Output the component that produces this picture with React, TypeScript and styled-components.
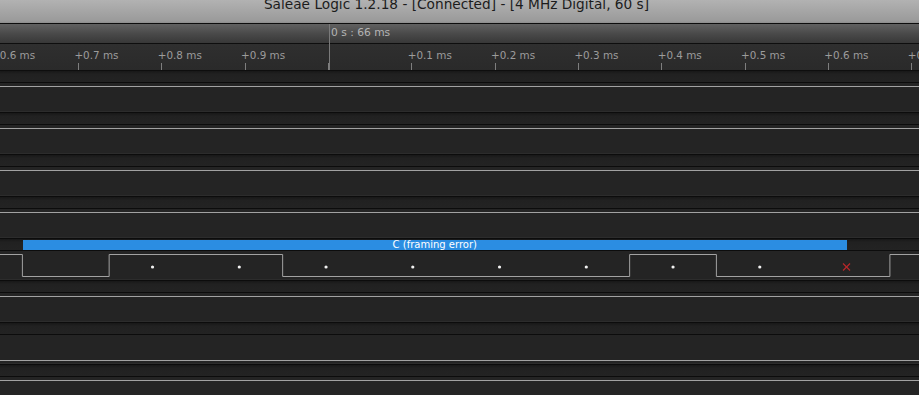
import React from 'react';
import styled, { createGlobalStyle } from 'styled-components';

const GlobalStyle = createGlobalStyle`
	html, body {
		margin: 0;
		padding: 0;
		background: #222;
		overflow: hidden;
	}
	* {
		box-sizing: border-box;
	}
`;

const FONT = `'DejaVu Sans', Verdana, sans-serif`;

const TICK_START = -5.33;
const TICK_STEP = 83.33;
const CURSOR_X = 329;

// serial frame timing (px)
const T0 = 22.4;
const BIT = 86.75;
const HIGH_Y = 3.5;
const LOW_Y = 25.5;

const tickLabels = ['+0.6', '+0.7', '+0.8', '+0.9', '', '+0.1', '+0.2', '+0.3', '+0.4', '+0.5', '+0.6', '+0.7'];

type Level = 'high' | 'low';

const channels: { level?: Level; serial?: boolean }[] = [
	{ level: 'high' },
	{ level: 'high' },
	{ level: 'high' },
	{ level: 'high' },
	{ serial: true },
	{ level: 'high' },
	{ level: 'low' },
	{ level: 'high' },
];

// start bit, data bits LSB first ('C' = 0x43), broken stop bit
const frameBits = [0, 1, 1, 0, 0, 0, 0, 1, 0, 0];

const serialPoints = () => {
	const pts: string[] = [`0,${HIGH_Y}`];
	let prev = 1;
	frameBits.forEach((b, i) => {
		if (b !== prev) {
			const x = T0 + i * BIT;
			pts.push(`${x},${prev ? HIGH_Y : LOW_Y}`, `${x},${b ? HIGH_Y : LOW_Y}`);
			prev = b;
		}
	});
	const end = T0 + frameBits.length * BIT;
	pts.push(`${end},${LOW_Y}`, `${end},${HIGH_Y}`, `919,${HIGH_Y}`);
	return pts.join(' ');
};

const App = () => {
	return (
		<Window>
			<GlobalStyle />
			<TitleBar>
				<TitleText>Saleae Logic 1.2.18 - [Connected] - [4 MHz Digital, 60 s]</TitleText>
			</TitleBar>
			<TimeBar>
				<TimeHeader />
				<Ruler>
					<TickStrip>
						{tickLabels.map((label, i) => (
							<TickCell key={i}>{label && <TickLabel>{label} ms</TickLabel>}</TickCell>
						))}
					</TickStrip>
				</Ruler>
				<Cursor style={{ left: CURSOR_X }}>
					<CursorLabel>0 s : 66 ms</CursorLabel>
				</Cursor>
			</TimeBar>
			<ChannelList>
				{channels.map((ch, i) => (
					<ChannelRow key={i}>
						<Band>
							{ch.serial && (
								<AnalyzerBar style={{ left: T0 + 0.6, width: BIT * 9.5 - 0.6 }}>C (framing error)</AnalyzerBar>
							)}
						</Band>
						<Rule />
						<Signal>
							<svg width="919" height="28" viewBox="0 0 919 28">
								{ch.serial ? (
									<>
										<polyline points={serialPoints()} fill="none" stroke="#a2a2a2" strokeWidth="1" />
										{Array.from({ length: 8 }, (_, k) => (
											<circle key={k} cx={T0 + BIT * (k + 1.5)} cy={16} r={1.6} fill="#f2f2f2" />
										))}
										<g stroke="#b8282a" strokeWidth="1.2">
											<line x1={T0 + BIT * 9.5 - 3.5} y1={12.5} x2={T0 + BIT * 9.5 + 3.5} y2={19.5} />
											<line x1={T0 + BIT * 9.5 + 3.5} y1={12.5} x2={T0 + BIT * 9.5 - 3.5} y2={19.5} />
										</g>
									</>
								) : (
									<line
										x1="0"
										x2="919"
										y1={ch.level === 'high' ? HIGH_Y : LOW_Y}
										y2={ch.level === 'high' ? HIGH_Y : LOW_Y}
										stroke="#a2a2a2"
										strokeWidth="1"
									/>
								)}
							</svg>
						</Signal>
						<Rule />
					</ChannelRow>
				))}
			</ChannelList>
		</Window>
	);
};

export default App;

const Window = styled.div`
	width: 919px;
	height: 395px;
	overflow: hidden;
	display: flex;
	flex-direction: column;
	background: #222;
	font-family: ${FONT};
`;

const TitleBar = styled.div`
	flex: none;
	height: 24px;
	overflow: hidden;
	background: linear-gradient(to bottom, #b2b2b2, #9a9a9a 92%, #8c8c8c);
	border-bottom: 1px solid #0d0d0d;
	text-align: center;
	padding-right: 6px;
`;

const TitleText = styled.div`
	margin-top: -4px;
	font-size: 13.7px;
	line-height: 16px;
	color: #1c1c1c;
	white-space: nowrap;
`;

const TimeBar = styled.div`
	position: relative;
	flex: none;
`;

const TimeHeader = styled.div`
	height: 20px;
	background: linear-gradient(to bottom, #616161, #4a4a4a 50%, #383838);
	border-bottom: 1px solid #0e0e0e;
`;

const Ruler = styled.div`
	height: 27px;
	overflow: hidden;
	background: linear-gradient(to bottom, #2f2f2f, #2a2a2a);
	border-bottom: 1px solid #0e0e0e;
`;

const TickStrip = styled.div`
	display: flex;
	margin-left: ${TICK_START}px;
	height: 100%;
`;

const TickCell = styled.div`
	position: relative;
	flex: none;
	width: ${TICK_STEP}px;
	height: 100%;
	&::after {
		content: '';
		position: absolute;
		left: 0;
		bottom: 0;
		width: 1px;
		height: 7px;
		background: #7e7e7e;
	}
`;

const TickLabel = styled.span`
	display: block;
	margin-left: -3.6px;
	padding-top: 5px;
	font-size: 10.4px;
	line-height: 12px;
	color: #9c9c9c;
	white-space: nowrap;
`;

const Cursor = styled.div`
	position: absolute;
	top: 0;
	bottom: 1px;
	width: 1px;
	background: #7a7a7a;
`;

const CursorLabel = styled.span`
	position: absolute;
	left: 2px;
	top: 3px;
	font-size: 10.7px;
	line-height: 12px;
	color: #b4b4b4;
	white-space: nowrap;
`;

const ChannelList = styled.div`
	display: flex;
	flex-direction: column;
`;

const ChannelRow = styled.div`
	flex: none;
	height: 42px;
	display: flex;
	flex-direction: column;
`;

const Band = styled.div`
	position: relative;
	height: 11px;
	background: linear-gradient(to bottom, #181818, #212121 30%, #232323);
`;

const AnalyzerBar = styled.div`
	position: absolute;
	top: 1px;
	height: 10px;
	background: #2b8de2;
	color: #fff;
	font-size: 10px;
	line-height: 10px;
	text-align: center;
	white-space: nowrap;
`;

const Rule = styled.div`
	height: 1px;
	background: #0c0c0c;
`;

const Signal = styled.div`
	height: 29px;
	background: #242424;
	border-bottom: 1px solid #2c2c2c;
	svg {
		display: block;
	}
`;
